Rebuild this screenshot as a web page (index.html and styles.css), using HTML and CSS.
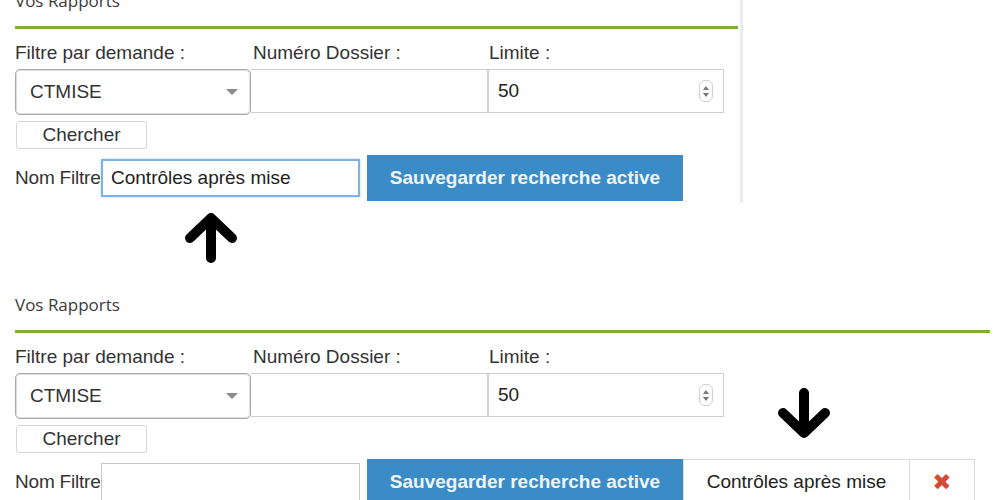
FILE: index.html
```html
<!DOCTYPE html>
<html lang="fr">
<head>
    <meta charset="UTF-8">
    <title>Vos Rapports</title>
    <link rel="stylesheet" href="styles.css">
</head>
<body>
    <div class="shot-top">
        <div class="panel">
            <div class="title">Vos Rapports</div>
            <div class="grid labels">
                <label>Filtre par demande :</label>
                <label>Numéro Dossier :</label>
                <label>Limite :</label>
            </div>
            <div class="grid fields">
                <div class="select">CTMISE<span class="caret"></span></div>
                <input class="text" type="text">
                <div class="number"><input type="text" value="50"><span class="spin"><i class="up"></i><i class="down"></i></span></div>
            </div>
            <button class="search">Chercher</button>
            <div class="save-row">
                <label>Nom Filtre</label>
                <input class="name focus" type="text" value="Contrôles après mise">
                <button class="save">Sauvegarder recherche active</button>
            </div>
        </div>
    </div>

    <div class="arrow-gap">
        <svg class="arrow" width="56" height="52" viewBox="0 0 56 52">
            <path d="M28 47 V9 M7 27 L28 7 L49 27" />
        </svg>
    </div>

    <div class="panel wide">
        <div class="title">Vos Rapports</div>
        <div class="grid labels">
            <label>Filtre par demande :</label>
            <label>Numéro Dossier :</label>
            <label>Limite :</label>
        </div>
        <div class="grid fields">
            <div class="select">CTMISE<span class="caret"></span></div>
            <input class="text" type="text">
            <div class="number"><input type="text" value="50"><span class="spin"><i class="up"></i><i class="down"></i></span></div>
        </div>
        <button class="search">Chercher</button>
        <div class="save-row">
            <label>Nom Filtre</label>
            <input class="name" type="text">
            <button class="save">Sauvegarder recherche active</button>
            <div class="saved">Contrôles après mise</div>
            <div class="remove">&#x2716;</div>
        </div>
        <svg class="arrow down-arrow" width="56" height="52" viewBox="0 0 56 52">
            <path d="M28 5 V43 M7 25 L28 45 L49 25" />
        </svg>
    </div>
</body>
</html>
```

FILE: styles.css
```css
body {
    margin: 0;
    background: #fff;
    font-family: "Liberation Sans", Arial, sans-serif;
    font-size: 19px;
    color: #333;
}
.shot-top {
    width: 740px;
    height: 203px;
    overflow: hidden;
    border-right: 3px solid #ececec;
}
.shot-top .panel {
    margin-top: -11px;
}
.panel {
    padding-left: 15px;
    padding-right: 2px;
    position: relative;
}
.panel.wide {
    padding-right: 10px;
}
.title {
    font-family: "Open Sans", sans-serif;
    font-size: 17px;
    line-height: 24px;
    color: #3a3a3a;
    padding-bottom: 13px;
    border-bottom: 3px solid #7ead35;
}
.grid {
    display: grid;
    grid-template-columns: 236px 237px 236px;
}
.labels {
    margin-top: 13px;
    line-height: 22px;
}
.labels label:nth-child(2) {
    padding-left: 2px;
}
.labels label:nth-child(3) {
    padding-left: 1px;
}
.fields {
    margin-top: 5px;
    height: 46px;
}
.select {
    display: flex;
    align-items: center;
    justify-content: space-between;
    padding: 0 12px 0 14px;
    border: 1px solid #a9a9a9;
    border-radius: 5px;
    box-shadow: inset 0 0 0 1px #ddd;
}
.caret {
    width: 0;
    height: 0;
    border-left: 6px solid transparent;
    border-right: 6px solid transparent;
    border-top: 6px solid #8a8a8a;
}
input {
    font: inherit;
    color: #222;
    outline: none;
}
.text {
    margin: 0;
    padding: 0;
    height: 44px;
    box-sizing: border-box;
    border: 1px solid #d0d0d0;
    border-left: none;
}
.number {
    display: flex;
    align-items: center;
    height: 44px;
    box-sizing: border-box;
    border: 1px solid #d0d0d0;
    padding: 0 10px 0 9px;
}
.number input {
    border: none;
    padding: 0;
    width: 100%;
    background: none;
}
.spin {
    flex: none;
    width: 12px;
    height: 20px;
    border: 1px solid #cfcfcf;
    border-radius: 6px;
    display: flex;
    flex-direction: column;
    align-items: center;
    justify-content: center;
    gap: 3px;
}
.spin i {
    width: 0;
    height: 0;
    border-left: 3px solid transparent;
    border-right: 3px solid transparent;
}
.spin .up {
    border-bottom: 4px solid #777;
}
.spin .down {
    border-top: 4px solid #777;
}
button {
    font: inherit;
    color: #333;
    cursor: pointer;
}
.search {
    display: block;
    margin: 6px 0 0 1px;
    width: 131px;
    height: 28px;
    padding: 0;
    background: #fff;
    border: 1px solid #d6d6d6;
    border-radius: 3px;
    line-height: 26px;
}
.save-row {
    display: flex;
    align-items: center;
    margin-top: 6px;
}
.save-row label {
    flex: none;
    width: 86px;
    white-space: nowrap;
    letter-spacing: -0.2px;
}
.name {
    flex: none;
    width: 259px;
    height: 38px;
    box-sizing: border-box;
    padding: 0 8px;
    margin: 0;
    border: 1px solid #c8c8c8;
}
.name.focus {
    border: 2px solid #7db3ea;
    box-shadow: 0 0 2px #a9cdf2;
}
.save {
    flex: none;
    margin-left: 7px;
    width: 316px;
    height: 46px;
    border: none;
    background: #3b8bc6;
    color: #eef5fb;
    font-weight: bold;
}
.saved {
    flex: none;
    width: 227px;
    height: 46px;
    box-sizing: border-box;
    border: 1px solid #dcdcdc;
    display: flex;
    align-items: center;
    justify-content: center;
    color: #222;
}
.remove {
    flex: none;
    width: 65px;
    height: 46px;
    box-sizing: border-box;
    border: 1px solid #dcdcdc;
    border-left: none;
    display: flex;
    align-items: center;
    justify-content: center;
    color: #d64a33;
    font-size: 23px;
    font-family: "DejaVu Sans", sans-serif;
}
.arrow-gap {
    height: 90px;
    padding: 8px 0 0 183px;
    box-sizing: border-box;
}
.arrow path {
    fill: none;
    stroke: #000;
    stroke-width: 10;
    stroke-linecap: round;
    stroke-linejoin: round;
}
.down-arrow {
    position: absolute;
    left: 776px;
    top: 95px;
}
```
